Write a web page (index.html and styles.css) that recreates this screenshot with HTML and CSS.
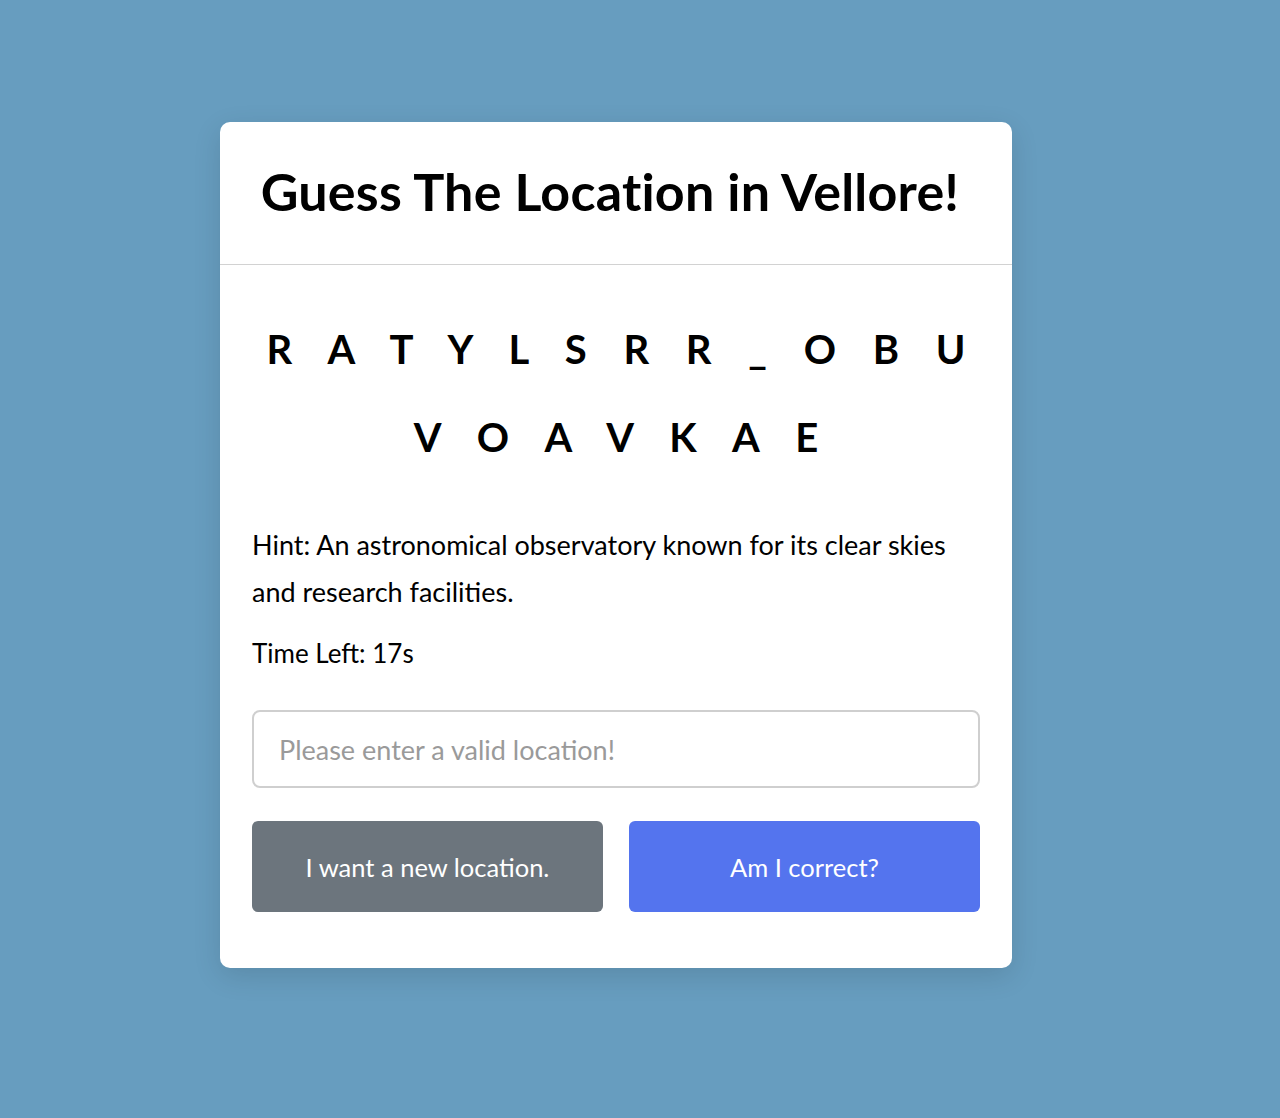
FILE: index.html
```html
<!DOCTYPE html>
<html lang="en">
<head>
<meta charset="utf-8">
<title>Guess The Location in Vellore!</title>
<link rel="stylesheet" href="styles.css">
</head>
<body>
<div class="card">
  <div class="card-header">
    <h1 class="title">Guess The Location in Vellore!</h1>
  </div>
  <div class="card-body">
    <div class="scramble">
      <div class="scramble-row">R A T Y L S R R _ O B U</div>
      <div class="scramble-row">V O A V K A E</div>
    </div>
    <p class="hint">Hint: An astronomical observatory known for its clear skies and research facilities.</p>
    <p class="timer">Time Left: 17s</p>
    <input class="guess-input" type="text" placeholder="Please enter a valid location!">
    <div class="actions">
      <button class="btn btn-secondary">I want a new location.</button>
      <button class="btn btn-primary">Am I correct?</button>
    </div>
  </div>
</div>
</body>
</html>
```
FILE: styles.css
```css
html, body {
  margin: 0;
  padding: 0;
}
body {
  background: #679dbf;
  min-height: 1118px;
  font-family: Lato, "Noto Sans", sans-serif;
  color: #000;
  padding: 122px 48px 0 0;
  box-sizing: border-box;
}
.card {
  width: 792px;
  margin: 0 auto;
  background: #fff;
  border-radius: 10px;
  box-shadow: 0 8px 28px rgba(0, 0, 0, 0.12);
}
.card-header {
  height: 142px;
  border-bottom: 1px solid #d2d2d2;
  display: flex;
  align-items: center;
  justify-content: center;
}
.title {
  margin: 0;
  font-size: 52px;
  font-weight: 700;
  letter-spacing: 0.2px;
  padding: 0 12px 4px 0;
}
.card-body {
  padding: 40px 32px 56px;
}
.scramble {
  text-align: center;
  font-size: 40px;
  font-weight: 700;
  line-height: 88px;
}
.scramble-row {
  white-space: nowrap;
  letter-spacing: 13.5px;
  margin-right: -13.5px;
}
.hint {
  margin: 40px 0 0;
  font-size: 27px;
  line-height: 47px;
}
.timer {
  margin: 18px 0 0;
  font-size: 26px;
  line-height: 40px;
}
.guess-input {
  display: block;
  box-sizing: border-box;
  width: 100%;
  height: 78px;
  margin-top: 37px;
  border: 2px solid #cfcfcf;
  border-radius: 8px;
  padding: 0 25px;
  font-family: inherit;
  font-size: 27px;
  color: #000;
  outline: none;
}
.guess-input::placeholder {
  color: #9a9a9a;
}
.actions {
  display: flex;
  gap: 26px;
  margin-top: 33px;
}
.btn {
  flex: 1;
  height: 91px;
  border: none;
  border-radius: 6px;
  color: #fff;
  font-family: inherit;
  font-size: 25.5px;
}
.btn-secondary {
  background: #6c757d;
}
.btn-primary {
  background: #5474ee;
}
```
